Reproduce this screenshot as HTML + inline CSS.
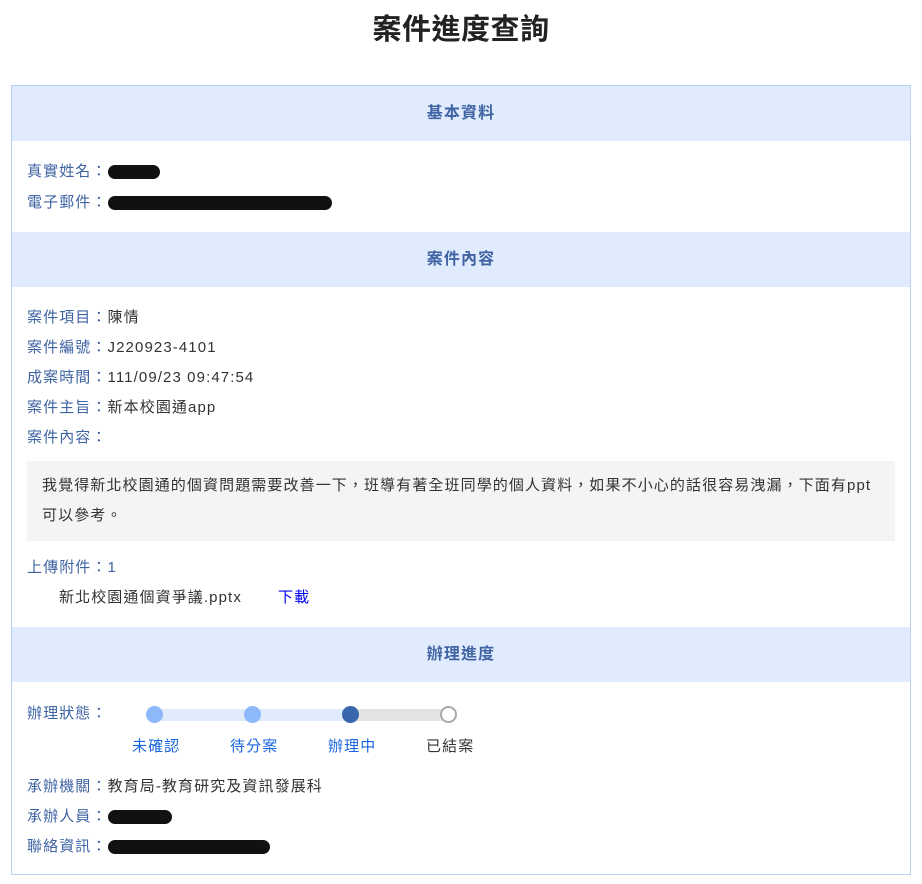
<!DOCTYPE html>
<html><head><meta charset="utf-8"><style>
body{margin:0;width:922px;height:884px;background:#fff;font-family:"Liberation Sans","Noto Sans CJK TC",sans-serif;font-size:15px;color:#333;position:relative;overflow:hidden;letter-spacing:1.1px}
.a{position:absolute;white-space:nowrap}
h1{position:absolute;left:0;width:922px;top:6px;margin:0;text-align:center;font-size:29px;font-weight:bold;color:#222;letter-spacing:0.5px}
.card{position:absolute;left:11px;top:85px;width:898px;height:788px;border:1px solid #b9d0f2}
.hd{position:absolute;left:12px;width:898px;height:55px;background:#e0ebfd;color:#3f63a3;font-weight:bold;text-align:center;line-height:55px;font-size:16px}
.l{color:#3f63a3}
.blk{display:inline-block;background:#111;border-radius:8px;height:14px;vertical-align:middle}
.box{position:absolute;left:27px;top:461px;width:868px;height:80px;background:#f4f4f4}
.dot{position:absolute;width:17px;height:17px;border-radius:50%;top:706px}
</style></head><body>
<h1>案件進度查詢</h1>
<div class="card"></div>
<div class="hd" style="top:86px">基本資料</div>
<div class="a" style="left:27px;top:160px"><span class="l">真實姓名：</span><span class="blk" style="width:52px"></span></div>
<div class="a" style="left:27px;top:191px"><span class="l">電子郵件：</span><span class="blk" style="width:224px"></span></div>
<div class="hd" style="top:232px">案件內容</div>
<div class="a" style="left:27px;top:306px"><span class="l">案件項目：</span>陳情</div>
<div class="a" style="left:27px;top:336px"><span class="l">案件編號：</span>J220923-4101</div>
<div class="a" style="left:27px;top:366px"><span class="l">成案時間：</span>111/09/23 09:47:54</div>
<div class="a" style="left:27px;top:396px"><span class="l">案件主旨：</span>新本校園通app</div>
<div class="a" style="left:27px;top:426px"><span class="l">案件內容：</span></div>
<div class="box"></div>
<div class="a" style="left:42px;top:471px;line-height:30px">我覺得新北校園通的個資問題需要改善一下，班導有著全班同學的個人資料，如果不小心的話很容易洩漏，下面有ppt<br>可以參考。</div>
<div class="a" style="left:27px;top:556px"><span class="l">上傳附件：1</span></div>
<div class="a" style="left:59px;top:586px">新北校園通個資爭議.pptx</div>
<div class="a" style="left:278px;top:586px;color:#0000ee">下載</div>
<div class="hd" style="top:627px">辦理進度</div>
<div class="a" style="left:27px;top:702px"><span class="l">辦理狀態：</span></div>
<div class="a" style="left:154px;top:709px;width:196px;height:12px;background:#e0ebfd"></div>
<div class="a" style="left:350px;top:709px;width:98px;height:12px;background:#e3e3e3"></div>
<div class="dot" style="left:146px;background:#8db8f9"></div>
<div class="dot" style="left:244px;background:#8db8f9"></div>
<div class="dot" style="left:342px;background:#3a66ad"></div>
<div class="dot" style="left:440px;top:706px;width:13px;height:13px;background:#fff;border:2px solid #aaa"></div>
<div class="a" style="left:132px;top:735px;color:#1a66e0">未確認</div>
<div class="a" style="left:230px;top:735px;color:#1a66e0">待分案</div>
<div class="a" style="left:328px;top:735px;color:#1a66e0">辦理中</div>
<div class="a" style="left:426px;top:735px;color:#333">已結案</div>
<div class="a" style="left:27px;top:775px"><span class="l">承辦機關：</span>教育局-教育研究及資訊發展科</div>
<div class="a" style="left:27px;top:805px"><span class="l">承辦人員：</span><span class="blk" style="width:64px"></span></div>
<div class="a" style="left:27px;top:835px"><span class="l">聯絡資訊：</span><span class="blk" style="width:162px"></span></div>
</body></html>
